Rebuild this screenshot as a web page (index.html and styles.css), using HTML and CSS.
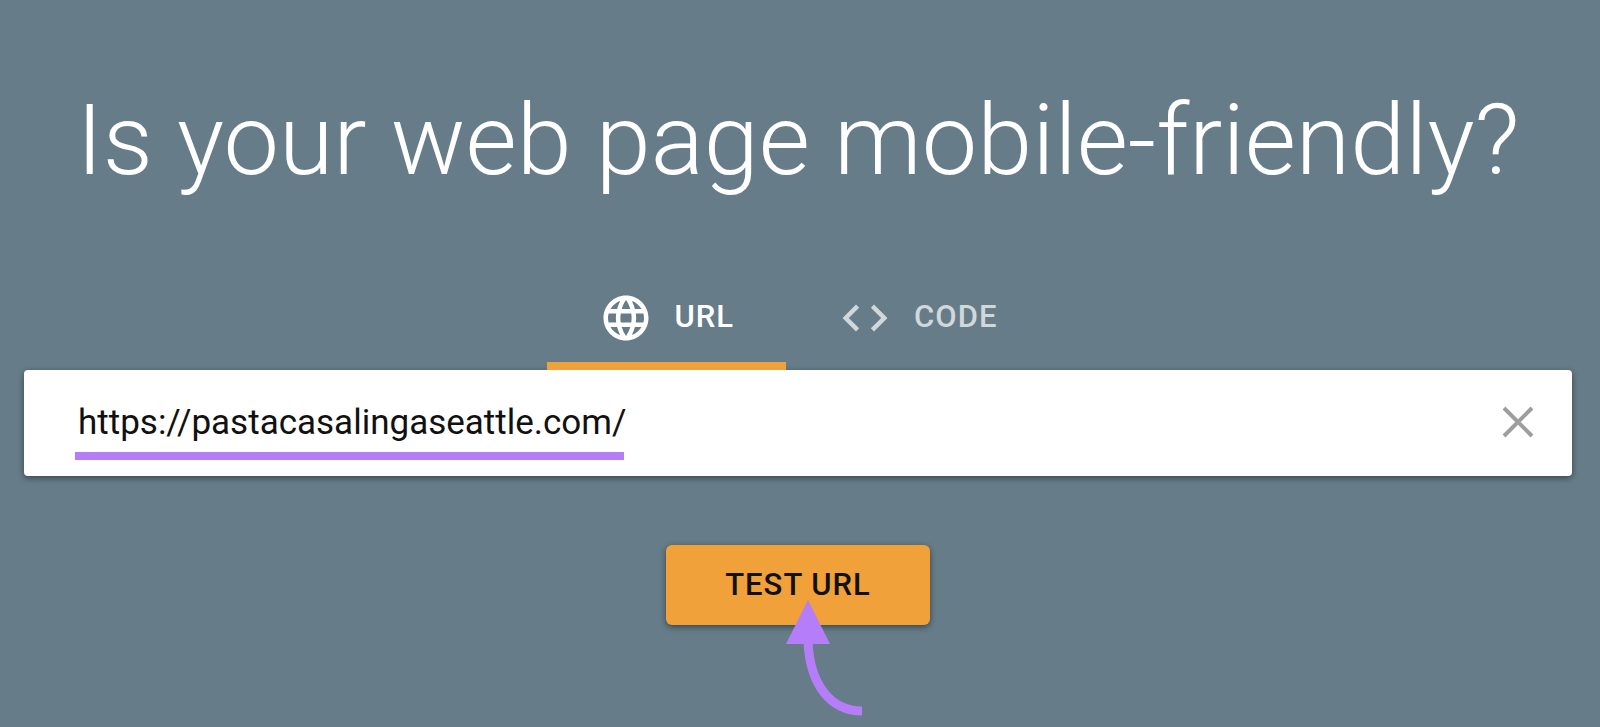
FILE: index.html
```html
<!DOCTYPE html>
<html lang="en">
<head>
<meta charset="utf-8">
<title>Mobile-Friendly Test</title>
<link rel="stylesheet" href="styles.css">
</head>
<body>
<main class="page">
  <h1 class="title">Is your web page mobile-friendly?</h1>
  <form class="test-form">
    <div class="tabs" role="tablist">
      <button class="tab tab-active" type="button" role="tab" aria-selected="true">
        <svg class="tab-icon" viewBox="0 0 24 24" aria-hidden="true"><path fill="currentColor" d="M11.99 2C6.47 2 2 6.48 2 12s4.47 10 9.99 10C17.52 22 22 17.52 22 12S17.52 2 11.99 2zm6.93 6h-2.95c-.32-1.25-.78-2.45-1.38-3.56 1.84.63 3.37 1.91 4.33 3.56zM12 4.04c.83 1.2 1.48 2.53 1.91 3.96h-3.82c.43-1.43 1.08-2.76 1.91-3.96zM4.26 14C4.1 13.36 4 12.69 4 12s.1-1.36.26-2h3.38c-.08.66-.14 1.32-.14 2s.06 1.34.14 2H4.26zm.82 2h2.95c.32 1.25.78 2.45 1.38 3.56-1.84-.63-3.37-1.9-4.33-3.56zm2.95-8H5.08c.96-1.66 2.49-2.93 4.33-3.56C8.81 5.55 8.35 6.75 8.03 8zM12 19.96c-.83-1.2-1.48-2.53-1.91-3.96h3.82c-.43 1.43-1.08 2.76-1.91 3.96zM14.34 14H9.66c-.09-.66-.16-1.32-.16-2s.07-1.35.16-2h4.68c.09.65.16 1.32.16 2s-.07 1.34-.16 2zm.25 5.56c.6-1.11 1.06-2.31 1.38-3.56h2.95c-.96 1.65-2.49 2.93-4.33 3.56zM16.36 14c.08-.66.14-1.32.14-2s-.06-1.34-.14-2h3.38c.16.64.26 1.31.26 2s-.1 1.36-.26 2h-3.38z"/></svg>
        <span class="tab-label">URL</span>
      </button>
      <button class="tab" type="button" role="tab" aria-selected="false">
        <svg class="tab-icon" viewBox="0 0 24 24" aria-hidden="true"><path fill="currentColor" d="M9.4 16.6L4.8 12l4.6-4.6L8 6l-6 6 6 6 1.4-1.4zm5.2 0l4.6-4.6-4.6-4.6L16 6l6 6-6 6-1.4-1.4z"/></svg>
        <span class="tab-label">CODE</span>
      </button>
    </div>
    <div class="field">
      <div class="entry">
        <input class="url-input" type="text" aria-label="URL to test" value="https://pastacasalingaseattle.com/" spellcheck="false">
        <span class="underline"></span>
      </div>
      <button class="clear" type="button" aria-label="Clear">
        <svg class="clear-icon" viewBox="0 0 32 32" aria-hidden="true"><path fill="none" stroke="currentColor" stroke-width="4" d="M2 2l28 28M30 2L2 30"/></svg>
      </button>
    </div>
    <div class="action">
      <button class="submit" type="button">TEST URL</button>
      <svg class="arrow" viewBox="0 0 76 116" aria-hidden="true"><path fill="currentColor" d="M22 0L44 44H0z"/><path fill="none" stroke="currentColor" stroke-width="9" d="M22 42C24 84 44 111 76 111"/></svg>
    </div>
  </form>
</main>
</body>
</html>
```
FILE: styles.css
```css
* {
  box-sizing: border-box;
}

body {
  margin: 0;
  background: #667c88;
  font-family: Roboto, "Liberation Sans", sans-serif;
}

button,
input {
  margin: 0;
  padding: 0;
  border: 0;
  background: none;
  font: inherit;
}

.page {
  min-height: 100vh;
  padding: 80px 28px 0 24px;
}

.title {
  margin: 0;
  color: #fff;
  font-size: 99px;
  font-weight: 300;
  line-height: 120px;
  text-align: center;
}

.test-form {
  padding-top: 68px;
}

.tabs {
  display: flex;
  justify-content: center;
}

.tab {
  display: flex;
  align-items: center;
  gap: 22px;
  height: 102px;
  padding: 6px 52px 0;
  border-bottom: 8px solid transparent;
  color: #d1d8db;
  font-size: 31px;
  font-weight: 500;
  letter-spacing: 1px;
}

.tab-active {
  border-bottom-color: #f0a13a;
  color: #fff;
}

.tab-icon {
  width: 54px;
  height: 54px;
}

.tab-label {
  padding-bottom: 4px;
}

.field {
  display: flex;
  align-items: center;
  justify-content: space-between;
  height: 106px;
  padding: 0 38px 2px 54px;
  border-radius: 4px;
  background: #fff;
  box-shadow: 0 2px 6px rgba(0, 0, 0, 0.45);
}

.entry {
  position: relative;
  flex: 1;
}

.url-input {
  display: block;
  width: 100%;
  height: 64px;
  outline: 0;
  color: #111;
  font-size: 35px;
}

.underline {
  position: absolute;
  left: -3px;
  bottom: -6px;
  width: 549px;
  height: 8px;
  background: #b57ef8;
}

.clear {
  color: #9e9e9e;
}

.clear-icon {
  display: block;
  width: 32px;
  height: 32px;
}

.action {
  position: relative;
  width: 264px;
  margin: 69px auto 0;
}

.submit {
  width: 100%;
  height: 80px;
  padding-bottom: 2px;
  border-radius: 6px;
  background: #f0a13a;
  box-shadow: 0 2px 6px rgba(0, 0, 0, 0.45);
  color: #111;
  font-size: 31px;
  font-weight: 500;
  letter-spacing: 1px;
}

.arrow {
  position: absolute;
  left: 120px;
  top: 55px;
  width: 76px;
  height: 116px;
  color: #b57ef8;
}
```
